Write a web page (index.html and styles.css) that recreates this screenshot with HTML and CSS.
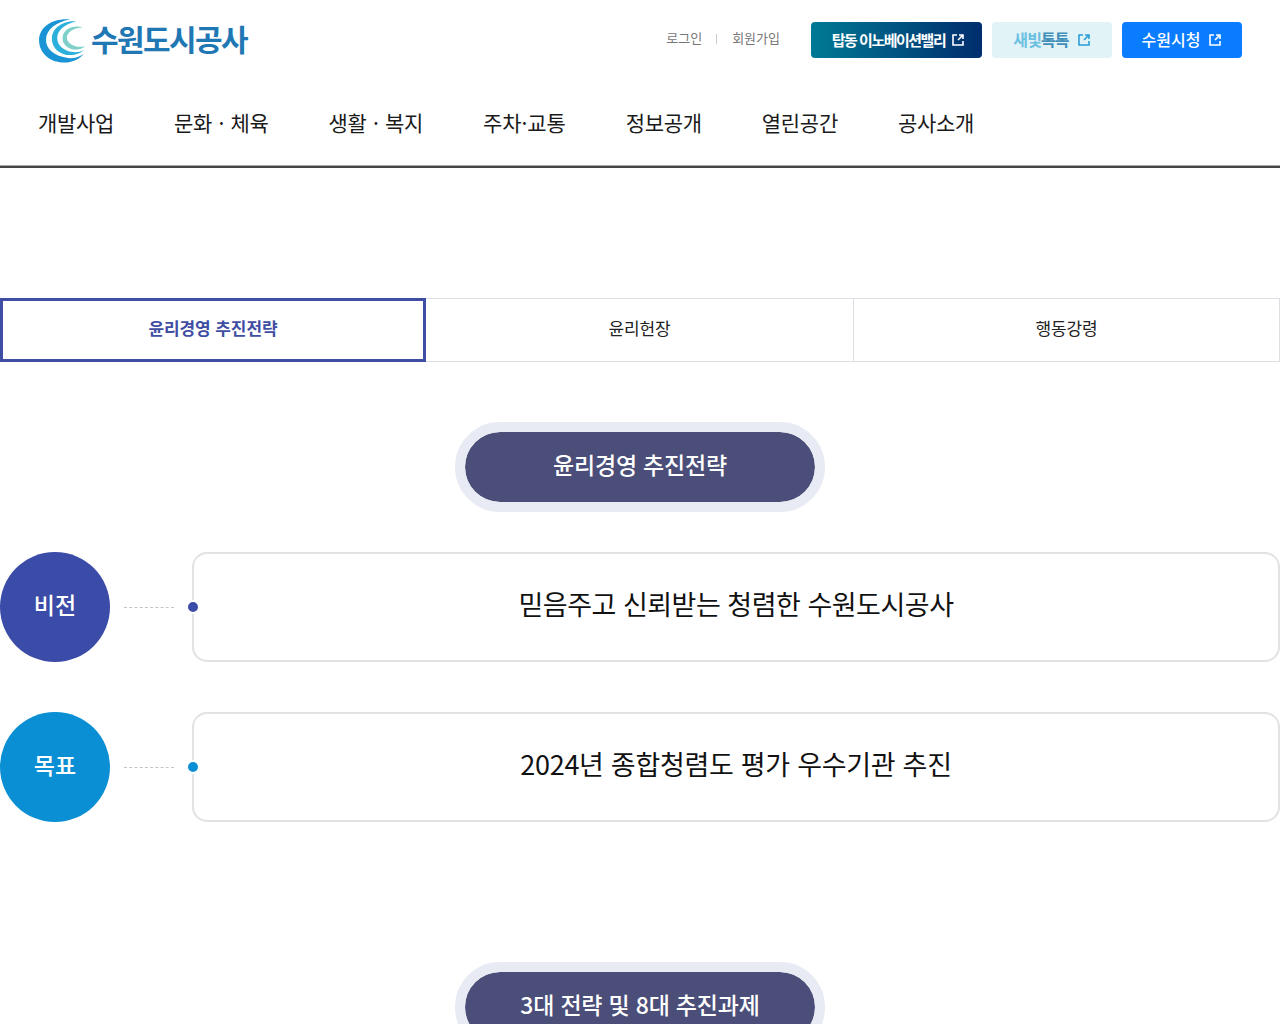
FILE: index.html
```html
<!DOCTYPE html>
<html lang="ko">
<head>
<meta charset="utf-8">
<title>윤리경영 추진전략</title>
<link rel="stylesheet" href="styles.css">
</head>
<body>
<header class="header">
  <div class="top">
    <a class="logo">
      <svg class="logo-mark" viewBox="0 0 44 48" preserveAspectRatio="none">
        <path d="M30 1.500C14 0 1 9 1 24c0 14 11 24 24 23.500 8-.3 14-4 18-9.500-5 4-11 5.500-16 4.500C15 40.500 7 33 7.500 22.500 8 12 17 4 30 1.500Z" fill="#1a94d4"/>
        <path d="M36 3.500C24 2.500 13 10 13 22c0 11 9 18.500 19 17.500 4-.4 8-2 11-5-4 2-8 2.500-12 1.500-7-1.500-13-7-13-14.500C18 13 25 6.500 36 3.500Z" fill="#2bb0dc"/>
        <path d="M42 10c-9-3-19 2-19 11.500 0 8 7 13 14 12 3-.4 5-1.500 7-3.500-3 1-6 1-9 0-5-1.500-8-5-8-9.500C27 15 34 10 42 10Z" fill="#7fd0c8"/>
      </svg>
      <span class="logo-text">수원도시공사</span>
    </a>
    <div class="utils">
      <a class="util">로그인</a>
      <span class="util-sep"></span>
      <a class="util">회원가입</a>
      <a class="btn btn-tapdong">탑동 이노베이션밸리<svg class="ext" viewBox="0 0 14 14"><path d="M6 2H2v10h10V8M8 2h4v4M12 2 7 7" fill="none" stroke="currentColor" stroke-width="1.600"/></svg></a>
      <a class="btn btn-saebit"><span><span class="saebit-a">새빛</span><span class="saebit-b">톡톡</span></span><svg class="ext" viewBox="0 0 14 14"><path d="M6 2H2v10h10V8M8 2h4v4M12 2 7 7" fill="none" stroke="currentColor" stroke-width="1.600"/></svg></a>
      <a class="btn btn-suwon">수원시청<svg class="ext" viewBox="0 0 14 14"><path d="M6 2H2v10h10V8M8 2h4v4M12 2 7 7" fill="none" stroke="currentColor" stroke-width="1.600"/></svg></a>
    </div>
  </div>
  <nav class="gnb">
    <a>개발사업</a>
    <a>문화 · 체육</a>
    <a>생활 · 복지</a>
    <a>주차·교통</a>
    <a>정보공개</a>
    <a>열린공간</a>
    <a>공사소개</a>
  </nav>
</header>
<main class="main">
  <div class="tabs">
    <a class="tab tab-on">윤리경영 추진전략</a>
    <a class="tab">윤리헌장</a>
    <a class="tab">행동강령</a>
  </div>
  <h2 class="pill">윤리경영 추진전략</h2>
  <section class="rows">
    <div class="row row-vision">
      <div class="circle">비전</div>
      <div class="dash"></div>
      <div class="box"><i class="dot"></i>믿음주고 신뢰받는 청렴한 수원도시공사</div>
    </div>
    <div class="row row-goal">
      <div class="circle">목표</div>
      <div class="dash"></div>
      <div class="box"><i class="dot"></i>2024년 종합청렴도 평가 우수기관 추진</div>
    </div>
  </section>
  <h2 class="pill pill-second">3대 전략 및 8대 추진과제</h2>
</main>
</body>
</html>
```
FILE: styles.css
```css
* { box-sizing: border-box; }
html, body { margin: 0; padding: 0; }
body {
  height: 1024px;
  overflow: hidden;
  background: #fff;
  color: #111;
  font-family: "Noto Sans CJK KR", "Noto Sans", sans-serif;
}
a { color: inherit; text-decoration: none; }
.header { height: 168px; border-bottom: 2px solid #454545; box-shadow: inset 0 -1px #a8a8a8; }
.top {
  height: 80px;
  padding: 0 38px;
  display: flex;
  align-items: center;
  justify-content: space-between;
}
.logo { display: flex; align-items: center; gap: 6px; }
.logo-mark { display: block; flex: none; width: 47px; height: 45px; margin-top: 1px; }
.logo-text {
  font-size: 30px;
  line-height: 40px;
  font-weight: 700;
  letter-spacing: -1.6px;
  color: #1f78b4;
  padding-bottom: 4px;
}
.utils { display: flex; align-items: center; height: 36px; }
.util { font-size: 13px; color: #777; line-height: 20px; margin-top: -4px; }
.util-sep { width: 1px; height: 10px; background: #ccc; margin: -2px 15px 0 14px; }
.btn {
  height: 36px;
  border-radius: 4px;
  display: flex;
  align-items: center;
  justify-content: center;
  gap: 6px;
  font-size: 15px;
  font-weight: 700;
  letter-spacing: -1.500px;
  color: #fff;
  padding-bottom: 2px;
}
.ext { width: 14px; height: 14px; flex: none; margin-top: 2px; }
.btn-tapdong { width: 171px; margin-left: 31px; padding-left: 4px; background: linear-gradient(90deg, #007a94, #002d6e); }
.btn-saebit { width: 120px; margin-left: 10px; background: #e2f3f8; gap: 8px; color: #2a9fd6; font-size: 16px; letter-spacing: -0.9px; }
.saebit-a { color: #6cc0e0; }
.saebit-b { color: #3f8fb8; }
.btn-suwon { width: 120px; margin-left: 10px; background: #0a7cff; font-size: 16px; font-weight: 500; letter-spacing: 0; gap: 8px; }
.gnb { height: 85px; padding: 0 0 2px 38px; display: flex; align-items: center; gap: 60px; font-size: 21px; letter-spacing: -0.3px; word-spacing: 0.85px; color: #1a1a1a; }
.gnb a:nth-child(4) { letter-spacing: -0.1px; }
.main { padding-top: 130px; }
.tabs { display: grid; grid-template-columns: 426px 428px 426px; height: 64px; }
.tab {
  display: flex;
  align-items: center;
  justify-content: center;
  border: 1px solid #dcdfe3;
  border-left: 0;
  font-size: 17px;
  letter-spacing: -0.1px;
  color: #222;
  padding-bottom: 6px;
}
.tab-on { border: 3px solid #3f4ea3; color: #3f4ea3; font-weight: 700; padding-bottom: 6px; }
.pill {
  width: 370px;
  height: 90px;
  margin: 60px auto 0;
  border: 10px solid #e8ebf3;
  border-radius: 45px;
  background: #4a4e78;
  background-clip: padding-box;
  color: #fff;
  font-size: 23px;
  font-weight: 500;
  letter-spacing: -0.2px;
  display: flex;
  align-items: center;
  justify-content: center;
  padding-bottom: 6px;
}
.pill-second { margin-top: 140px; }
.rows { margin-top: 40px; display: flex; flex-direction: column; gap: 50px; }
.row { display: flex; align-items: center; height: 110px; }
.circle {
  width: 110px;
  height: 110px;
  border-radius: 50%;
  flex: none;
  color: #fff;
  font-size: 23px;
  font-weight: 500;
  display: flex;
  align-items: center;
  justify-content: center;
  padding-bottom: 6px;
}
.row-vision .circle { background: #3b4ba8; }
.row-goal .circle { background: #0a8fd4; }
.dash { width: 50px; margin: 0 18px 0 14px; border-top: 1px dashed #c4c4c4; flex: none; }
.box {
  position: relative;
  flex: 1;
  height: 110px;
  border: 2px solid #e2e2e2;
  border-radius: 15px;
  display: flex;
  align-items: center;
  justify-content: center;
  font-size: 27px;
  letter-spacing: -0.5px;
  color: #111;
  padding-bottom: 8px;
}
.row-goal .box { letter-spacing: -0.3px; }
.dot {
  position: absolute;
  left: -8px;
  top: 46px;
  width: 10px;
  height: 10px;
  border-radius: 50%;
  border: 2px solid #fff;
  box-sizing: content-box;
}
.row-vision .dot { background: #3b4ba8; }
.row-goal .dot { background: #0a8fd4; }
```
